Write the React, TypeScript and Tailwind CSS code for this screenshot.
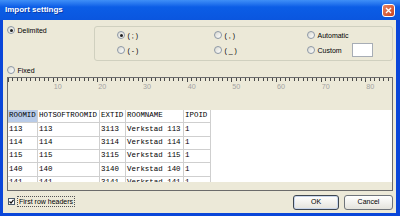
import React from "react";

const rows = [
  ["113", "113", "3113", "Verkstad 113", "1"],
  ["114", "114", "3114", "Verkstad 114", "1"],
  ["115", "115", "3115", "Verkstad 115", "1"],
  ["140", "140", "3140", "Verkstad 140", "1"],
  ["141", "141", "3141", "Verkstad 141", "1"],
];

const headers = ["ROOMID", "HOTSOFTROOMID", "EXTID", "ROOMNAME", "IPOID"];

const UNIT = 4.467;

function Radio({ checked, label }: { checked?: boolean; label: string }) {
  return (
    <div className="flex h-[8px] items-center gap-[2.5px]">
      <span className="flex h-[8px] w-[8px] shrink-0 items-center justify-center rounded-full border border-[#8d98a6] bg-gradient-to-br from-[#d8d8d0] to-white">
        {checked && <span className="h-[3px] w-[3px] rounded-full bg-[#222]" />}
      </span>
      <span className="whitespace-pre leading-none">{label}</span>
    </div>
  );
}

function Ruler() {
  const ticks = Array.from({ length: 87 }, (_, i) => i);
  return (
    <svg width="384" height="32" className="block">
      {ticks.map((i) => {
        const x = Math.round(i * UNIT) + 0.5;
        const len = i % 10 === 0 ? 4 : 3;
        return <line key={i} x1={x} y1={0} x2={x} y2={len} stroke="#4a4a4a" strokeWidth="1" />;
      })}
      {[10, 20, 30, 40, 50, 60, 70, 80].map((n) => (
        <text
          key={n}
          x={n * UNIT + 1}
          y={11}
          fill="#a3a3a3"
          fontSize="7.2"
          fontFamily="Liberation Sans, Arial, sans-serif"
        >
          {n}
        </text>
      ))}
    </svg>
  );
}

function Cell({ children, head, first }: { children: React.ReactNode; head?: boolean; first?: boolean }) {
  return (
    <div
      className={
        "flex h-[13.33px] items-center overflow-hidden whitespace-pre border-b border-r border-[#cfcfcf] pl-[1px] " +
        (head && first ? "bg-[#b8cbe8]" : "")
      }
    >
      {children}
    </div>
  );
}

export default function App() {
  return (
    <div className="flex h-[216px] w-[400px] flex-col overflow-hidden bg-[#0a46d9] font-['Liberation_Sans',Arial,sans-serif] text-[7px] text-black">
      {/* Title bar */}
      <div className="flex h-[20px] shrink-0 items-center justify-between bg-gradient-to-b from-[#3f8ff7] via-[#0b5de6] via-35% to-[#0a56df] pl-[5px] pr-[5px]">
        <span className="text-[8px] font-bold text-white [text-shadow:1px_1px_0_#0a3aa8]">Import settings</span>
        <span className="flex h-[13px] w-[13px] items-center justify-center rounded-[3px] border border-white bg-gradient-to-br from-[#e8835f] to-[#c9421f]">
          <svg width="7" height="7" viewBox="0 0 7 7">
            <path d="M1 1 L6 6 M6 1 L1 6" stroke="white" strokeWidth="1.4" />
          </svg>
        </span>
      </div>

      {/* Body */}
      <div className="ml-[3px] mr-[4px] mb-[3px] flex flex-1 flex-col bg-[#ece9d8] pl-[4px] pr-[3px]">
        <div className="flex items-start pt-[6px]">
          <Radio checked label="Delimited" />
          <div className="ml-auto grid h-[35px] w-[299px] grid-cols-[97px_93px_1fr] grid-rows-[14px_14px] gap-y-[1px] rounded-[3px] border border-[#d0d0bf] pl-[22px] pt-[1px]">
            <div className="flex items-center">
              <Radio checked label="( ; )" />
            </div>
            <div className="flex items-center">
              <Radio label="( , )" />
            </div>
            <div className="flex items-center">
              <Radio label="Automatic" />
            </div>
            <div className="flex items-center">
              <Radio label="( - )" />
            </div>
            <div className="flex items-center">
              <Radio label="( _ )" />
            </div>
            <div className="flex items-center gap-[10px]">
              <Radio label="Custom" />
              <span className="h-[14px] w-[21px] border border-[#a7adb5] bg-white" />
            </div>
          </div>
        </div>

        <div className="mt-[5px]">
          <Radio label="Fixed" />
        </div>

        {/* Ruler and grid */}
        <div className="mt-[3px] flex h-[114px] flex-col border border-[#6b6b6b]">
          <div className="h-[32px] shrink-0">
            <Ruler />
          </div>
          <div className="h-[72px] shrink-0 overflow-hidden bg-white font-['Liberation_Mono',monospace] text-[7.45px] leading-none">
            <div className="grid grid-cols-[30px_62px_26px_58px_27px]">
              {headers.map((h, i) => (
                <Cell key={h} head first={i === 0}>
                  {h}
                </Cell>
              ))}
              {rows.map((r) =>
                r.map((v, i) => <Cell key={r[0] + i}>{v}</Cell>)
              )}
            </div>
          </div>
          <div className="flex-1" />
        </div>

        {/* Bottom */}
        <div className="mt-[4px] flex h-[15px] items-start">
          <div className="ml-[1px] mt-[1px] flex items-center gap-[2px]">
            <span className="flex h-[7px] w-[7px] items-center justify-center border border-[#4a5a6a] bg-white">
              <svg width="5" height="5" viewBox="0 0 5 5">
                <path d="M0.5 2.5 L2 4 L4.5 0.8" stroke="#111" strokeWidth="1.2" fill="none" />
              </svg>
            </span>
            <span className="border border-dotted border-[#555] px-[1px] py-[1px] leading-none">First row headers</span>
          </div>
          <div className="ml-auto flex gap-[5px]">
            <button className="flex h-[15px] w-[46px] items-center justify-center rounded-[3px] border border-[#3d4650] bg-gradient-to-b from-white to-[#e4e3dc] shadow-[inset_0_0_0_1px_#c9d6ec]">
              OK
            </button>
            <button className="flex h-[15px] w-[49px] items-center justify-center rounded-[3px] border border-[#6f747a] bg-gradient-to-b from-white to-[#e4e3dc]">
              Cancel
            </button>
          </div>
        </div>
      </div>
    </div>
  );
}
